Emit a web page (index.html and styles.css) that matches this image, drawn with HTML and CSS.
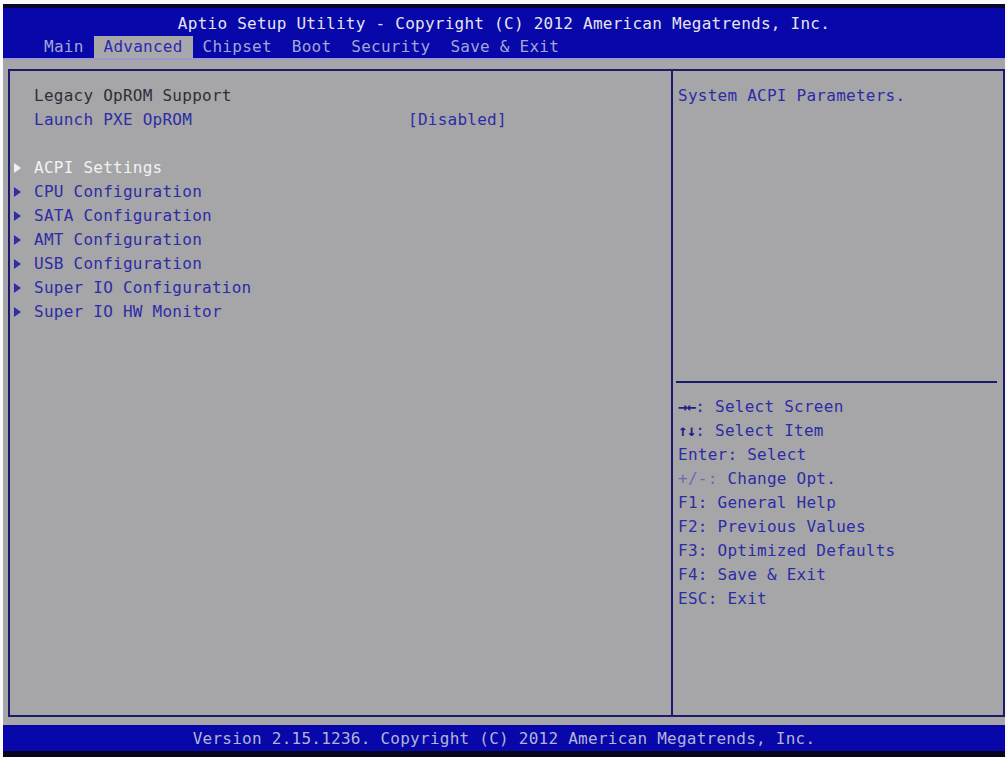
FILE: index.html
```html
<!DOCTYPE html>
<html lang="en">
<head>
    <meta charset="UTF-8">
    <meta name="viewport" content="width=device-width, initial-scale=1.0">
    <title>Aptio Setup Utility</title>
    <link rel="stylesheet" href="styles.css">
</head>
<body>
    <div class="screen">
        <header class="topbar">
            <div class="title">Aptio Setup Utility - Copyright (C) 2012 American Megatrends, Inc.</div>
            <nav class="tabs">
                <span class="tab">Main</span><span class="tab active">Advanced</span><span class="tab">Chipset</span><span class="tab">Boot</span><span class="tab">Security</span><span class="tab">Save &amp; Exit</span>
            </nav>
        </header>

        <main class="body">
            <div class="frame">
                <section class="menu">
                    <div class="row label">Legacy OpROM Support</div>
                    <div class="row setting">
                        <span class="name">Launch PXE OpROM</span>
                        <span class="value">[Disabled]</span>
                    </div>
                    <div class="row blank"></div>
                    <div class="row sub selected"><span class="arrow"></span>ACPI Settings</div>
                    <div class="row sub"><span class="arrow"></span>CPU Configuration</div>
                    <div class="row sub"><span class="arrow"></span>SATA Configuration</div>
                    <div class="row sub"><span class="arrow"></span>AMT Configuration</div>
                    <div class="row sub"><span class="arrow"></span>USB Configuration</div>
                    <div class="row sub"><span class="arrow"></span>Super IO Configuration</div>
                    <div class="row sub"><span class="arrow"></span>Super IO HW Monitor</div>
                </section>
                <aside class="help">
                    <div class="help-desc">System ACPI Parameters.</div>
                    <div class="keys">
                        <div class="key"><b>&rarr;&larr;</b>: Select Screen</div>
                        <div class="key"><b>&uarr;&darr;</b>: Select Item</div>
                        <div class="key">Enter: Select</div>
                        <div class="key"><span class="dim">+/-:</span> Change Opt.</div>
                        <div class="key">F1: General Help</div>
                        <div class="key">F2: Previous Values</div>
                        <div class="key">F3: Optimized Defaults</div>
                        <div class="key">F4: Save &amp; Exit</div>
                        <div class="key">ESC: Exit</div>
                    </div>
                </aside>
            </div>
        </main>

        <footer class="bottombar">Version 2.15.1236. Copyright (C) 2012 American Megatrends, Inc.</footer>
    </div>
</body>
</html>
```

FILE: styles.css
```css
html, body {
    margin: 0;
    padding: 0;
    background-color: #fafafa;
}
body {
    font-family: "DejaVu Sans Mono", "Liberation Mono", monospace;
    font-size: 16px;
    letter-spacing: 0.25px;
    overflow: hidden;
}
.screen {
    margin: 4px 0 0 3px;
    width: 1002px;
    height: 753px;
    display: flex;
    flex-direction: column;
    background-color: #a6a6a8;
}

/* top bar */
.topbar {
    background-color: #0707aa;
    border-top: 4px solid #06062e;
    border-bottom: 2px solid #9a9ad0;
    height: 50px;
}
.title {
    padding-top: 4px;
    line-height: 24px;
    height: 24px;
    text-align: center;
    color: #e4e4ec;
}
.tabs {
    display: flex;
    padding-left: 31px;
    height: 22px;
    line-height: 22px;
}
.tab {
    padding: 0 10px;
    color: #a4a6d2;
}
.tab.active {
    background-color: #a8a8aa;
    color: #2a2ab4;
}

/* main grey area */
.body {
    flex: 1;
    display: flex;
    padding: 9px 0 8px 5px;
}
.frame {
    flex: 1;
    display: flex;
    border: 2px solid #1a1a6e;
}
.menu {
    width: 661px;
    padding-top: 13px;
}
.row {
    height: 24px;
    line-height: 24px;
    white-space: pre;
}
.label {
    padding-left: 24px;
    color: #2e2e36;
}
.setting {
    display: grid;
    grid-template-columns: 374px auto;
    padding-left: 24px;
    color: #2c2ca6;
}
.sub {
    display: flex;
    align-items: center;
    padding-left: 4px;
    color: #2c2ca6;
}
.sub.selected {
    color: #f2f2f4;
}
.arrow {
    width: 0;
    height: 0;
    border-left: 7px solid currentColor;
    border-top: 5px solid transparent;
    border-bottom: 5px solid transparent;
    margin-right: 13px;
}

/* right help panel */
.help {
    flex: 1;
    display: flex;
    flex-direction: column;
    border-left: 2px solid #1a1a6e;
    color: #2c2ca6;
}
.help-desc {
    height: 297px;
    padding: 13px 0 0 5px;
    line-height: 24px;
    border-bottom: 2px solid #1a1a6e;
    margin: 0 6px 0 3px;
    padding-left: 2px;
}
.keys {
    padding: 12px 0 0 5px;
}
.key {
    height: 24px;
    line-height: 24px;
    white-space: pre;
}
.key b {
    font-weight: bold;
    color: #1e1e8a;
    letter-spacing: -1px;
}
.dim {
    color: #6a6ab8;
}

/* bottom bar */
.bottombar {
    height: 26px;
    line-height: 28px;
    background-color: #0707aa;
    border-bottom: 6px solid #05051c;
    text-align: center;
    color: #b4b4d6;
}
```
